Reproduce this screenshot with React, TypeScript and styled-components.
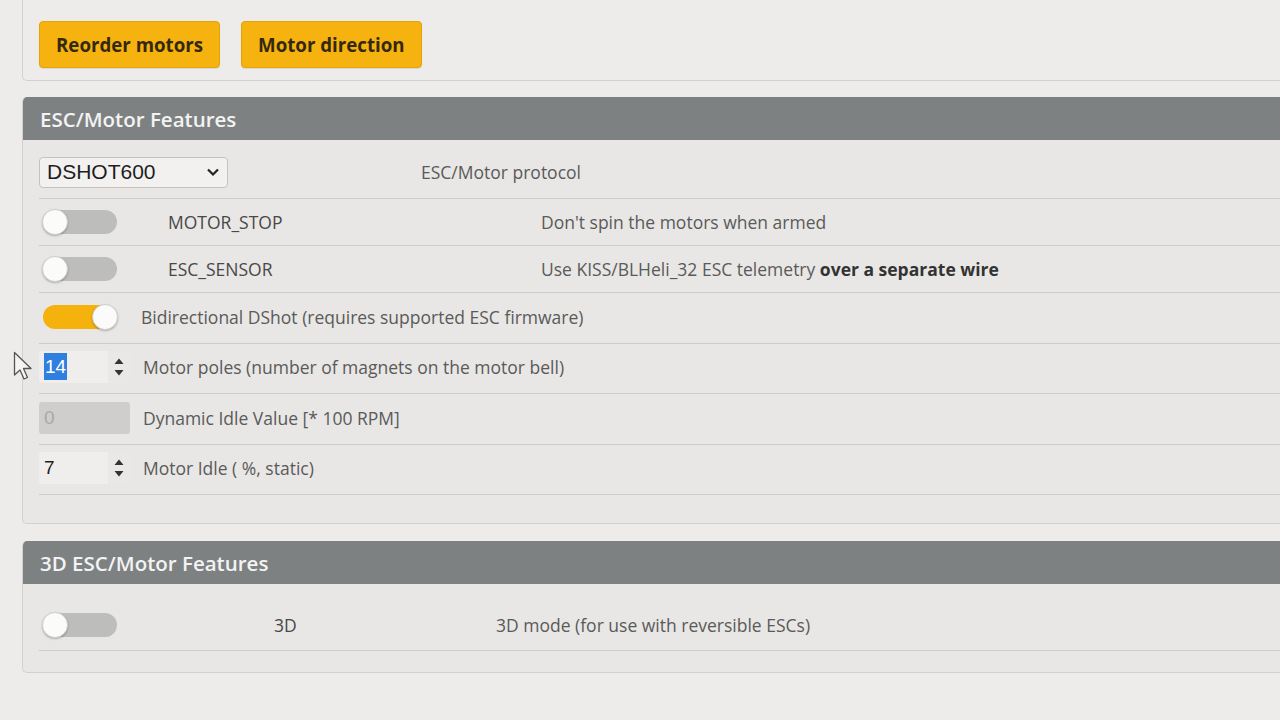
import styled, { createGlobalStyle } from "styled-components";

const GlobalStyle = createGlobalStyle`
  html, body {
    margin: 0;
    padding: 0;
    background: #edecea;
    font-family: "Open Sans", "Noto Sans", sans-serif;
  }
`;

const Page = styled.div`
  position: relative;
  width: 1280px;
  height: 720px;
  overflow: hidden;
  padding-left: 22px;
  box-sizing: border-box;
`;

const TopPanel = styled.div`
  display: flex;
  gap: 21px;
  padding: 21px 0 12px 16px;
  border: 1px solid #d2d1cf;
  border-top: none;
  border-right: none;
  border-bottom-left-radius: 5px;
`;

const ActionButton = styled.button`
  height: 47px;
  padding: 0 16px;
  background: #f6b20e;
  border: 1px solid #e4a408;
  border-radius: 4px;
  color: #34290f;
  font-family: "Open Sans", sans-serif;
  font-weight: 700;
  font-size: 18.7px;
  box-shadow: 0 1px 1px rgba(0, 0, 0, 0.08);
`;

const Panel = styled.section<{ $top: number; $bottom: number }>`
  margin-top: ${(p) => p.$top}px;
  border: 1px solid #d2d1cf;
  border-top: none;
  border-right: none;
  border-radius: 5px 0 0 5px;
  background: #e8e7e5;
  padding-bottom: ${(p) => p.$bottom}px;
  overflow: hidden;
`;

const PanelHeader = styled.h2`
  margin: 0;
  height: 43px;
  display: flex;
  align-items: center;
  padding-left: 17px;
  background: #7e8182;
  color: #f3f3f3;
  font-size: 20.5px;
  font-weight: 600;
`;

const PanelBody = styled.div<{ $top: number }>`
  padding: ${(p) => p.$top}px 0 0 16px;
`;

const Row = styled.div<{ $cols: string; $h: number; $lift?: number }>`
  display: grid;
  grid-template-columns: ${(p) => p.$cols};
  align-items: center;
  height: ${(p) => p.$h}px;
  box-sizing: border-box;
  padding-bottom: ${(p) => p.$lift ?? 0}px;
  border-bottom: 1px solid #cdccca;
  font-size: 17.5px;
`;

const Name = styled.span`
  color: #484848;
`;

const Desc = styled.span`
  color: #5a5a5a;
  b {
    color: #333;
    font-weight: 700;
  }
`;

const SelectBox = styled.div`
  width: 189px;
  height: 31px;
  box-sizing: border-box;
  border: 1px solid #c4c3c1;
  border-radius: 4px;
  background: #f2f1ef;
  display: flex;
  align-items: center;
  justify-content: space-between;
  padding: 0 7px 0 7px;
  font-family: "Liberation Sans", Arial, sans-serif;
  font-size: 21px;
  color: #1e1e1e;
`;

const Toggle = styled.div<{ $on?: boolean }>`
  position: relative;
  margin-left: 4px;
  width: 74px;
  height: 24px;
  border-radius: 12px;
  background: ${(p) => (p.$on ? "#f5b10c" : "#bdbdbc")};
  &::after {
    content: "";
    position: absolute;
    top: -1px;
    ${(p) => (p.$on ? "right: -1px;" : "left: -1px;")}
    width: 24px;
    height: 24px;
    border-radius: 50%;
    background: #fbfbfa;
    border: 1px solid #cfcfcf;
    box-shadow: 0 1px 2px rgba(0, 0, 0, 0.25);
  }
`;

const NumberBox = styled.div<{ $disabled?: boolean }>`
  width: 91px;
  height: 32px;
  box-sizing: border-box;
  display: flex;
  align-items: center;
  border-radius: 3px;
  background: ${(p) => (p.$disabled ? "#cfcecc" : "#efeeec")};
  font-family: "Liberation Sans", Arial, sans-serif;
  font-size: 19px;
  color: ${(p) => (p.$disabled ? "#a9a9a9" : "#1e1e1e")};
`;

const NumberValue = styled.span`
  flex: 1;
  padding-left: 5px;
`;

const Selected = styled.span`
  background: #2f7fe0;
  color: #fff;
  padding: 3px 1px;
`;

const Spinner = styled.div`
  width: 22px;
  height: 100%;
  display: flex;
  align-items: center;
  justify-content: center;
  background: #e9e8e6;
`;

const Cursor = styled.svg`
  position: absolute;
  left: 13px;
  top: 351px;
`;

function Arrows() {
  return (
    <Spinner>
      <svg width="12" height="24" viewBox="0 0 12 24">
        <path d="M6 3.5 L10.5 9 H1.5 Z" fill="#333" />
        <path d="M6 20.5 L10.5 15 H1.5 Z" fill="#333" />
      </svg>
    </Spinner>
  );
}

export default function App() {
  return (
    <Page>
      <GlobalStyle />
      <TopPanel>
        <ActionButton>Reorder motors</ActionButton>
        <ActionButton>Motor direction</ActionButton>
      </TopPanel>

      <Panel $top={16} $bottom={28}>
        <PanelHeader>ESC/Motor Features</PanelHeader>
        <PanelBody $top={9}>
          <Row $cols="382px 1fr" $h={50} $lift={3}>
            <SelectBox>
              DSHOT600
              <svg width="14" height="10" viewBox="0 0 14 10">
                <path d="M2 2.5 L7 7.5 L12 2.5" fill="none" stroke="#222" strokeWidth="2.2" />
              </svg>
            </SelectBox>
            <Desc>ESC/Motor protocol</Desc>
          </Row>
          <Row $cols="129px 373px 1fr" $h={47}>
            <Toggle />
            <Name>MOTOR_STOP</Name>
            <Desc>Don't spin the motors when armed</Desc>
          </Row>
          <Row $cols="129px 373px 1fr" $h={47}>
            <Toggle />
            <Name>ESC_SENSOR</Name>
            <Desc>
              Use KISS/BLHeli_32 ESC telemetry <b>over a separate wire</b>
            </Desc>
          </Row>
          <Row $cols="102px 1fr" $h={51} $lift={3}>
            <Toggle $on />
            <Desc>Bidirectional DShot (requires supported ESC firmware)</Desc>
          </Row>
          <Row $cols="104px 1fr" $h={50} $lift={4}>
            <NumberBox>
              <NumberValue>
                <Selected>14</Selected>
              </NumberValue>
              <Arrows />
            </NumberBox>
            <Desc>Motor poles (number of magnets on the motor bell)</Desc>
          </Row>
          <Row $cols="104px 1fr" $h={51} $lift={3}>
            <NumberBox $disabled>
              <NumberValue>0</NumberValue>
            </NumberBox>
            <Desc>Dynamic Idle Value [* 100 RPM]</Desc>
          </Row>
          <Row $cols="104px 1fr" $h={50} $lift={4}>
            <NumberBox>
              <NumberValue>7</NumberValue>
              <Arrows />
            </NumberBox>
            <Desc>Motor Idle ( %, static)</Desc>
          </Row>
        </PanelBody>
      </Panel>

      <Panel $top={17} $bottom={21}>
        <PanelHeader>3D ESC/Motor Features</PanelHeader>
        <PanelBody $top={16}>
          <Row $cols="235px 222px 1fr" $h={51}>
            <Toggle />
            <Name>3D</Name>
            <Desc>3D mode (for use with reversible ESCs)</Desc>
          </Row>
        </PanelBody>
      </Panel>

      <Cursor width="22" height="32" viewBox="0 0 22 32">
        <path
          d="M1.5 1.5 L1.5 24 L7 19 L11 28 L14.5 26.5 L10.5 17.5 L18 17.5 Z"
          fill="#f4f4f4"
          stroke="#555"
          strokeWidth="1.3"
          strokeLinejoin="round"
        />
      </Cursor>
    </Page>
  );
}
